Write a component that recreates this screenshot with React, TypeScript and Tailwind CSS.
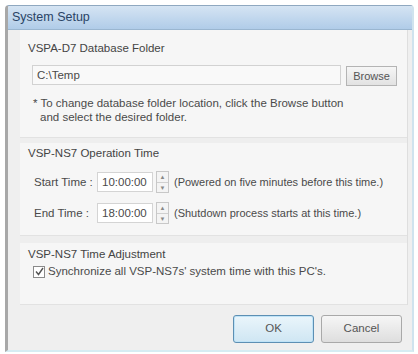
import React from "react";

function Spinner() {
  return (
    <div className="flex flex-col w-[13px] h-[22px] border border-[#c8c8c8] bg-[#f4f4f4] ml-[3px]">
      <div className="flex-1 flex items-center justify-center border-b border-[#d0d0d0] text-[6px] leading-none text-[#888]">
        ▲
      </div>
      <div className="flex-1 flex items-center justify-center text-[6px] leading-none text-[#888]">
        ▼
      </div>
    </div>
  );
}

interface TimeRowProps {
  label: string;
  value: string;
  note: string;
}

function TimeRow({ label, value, note }: TimeRowProps) {
  return (
    <div className="flex items-center h-[22px]">
      <span className="w-[64px] pl-[1px]">{label}</span>
      <div className="w-[56px] h-[20px] border border-[#d4d4d4] bg-white flex items-center pl-[4px]">
        {value}
      </div>
      <Spinner />
      <span className="ml-[5px] text-[11px]">{note}</span>
    </div>
  );
}

function Section({ title, className, children }: { title: string; className: string; children: React.ReactNode }) {
  return (
    <div className={"bg-[#f6f6f6] border-b border-[#e2e2e2] pl-[8px] " + className}>
      <div className="text-[#444]">{title}</div>
      <div className="pl-[5px]">{children}</div>
    </div>
  );
}

export default function App() {
  return (
    <div className="w-[418px] h-[354px] bg-white text-[11.5px] text-[#4a4a4a] font-['Liberation_Sans',Arial,sans-serif] pt-[5px] pl-[5px]">
      <div className="w-[409px] h-[347px] flex flex-col border-l-[3px] border-l-[#a8a8a8] border-r-2 border-r-[#cfe3ee] border-b-2 border-b-[#d6ecf3] border-t border-t-[#8fa8c0] rounded-t-[4px] overflow-hidden bg-[#efefef]">
        <div className="h-[24px] flex items-center pl-[4px] bg-gradient-to-b from-[#d5e4f3] to-[#b0cce8] border-b border-[#9ab6d0] text-[12.5px] text-[#2a4466]">
          System Setup
        </div>
        <div className="flex-1 flex flex-col pl-[12px] pr-[4px]">
          <div className="flex flex-col bg-[#f4f4f4] border-r border-[#dedede]">
            <Section title="VSPA-D7 Database Folder" className="h-[108px] pt-[10px]">
              <div className="flex items-center mt-[7px]">
                <div className="w-[309px] h-[20px] border border-[#d2d2d2] bg-[#f9f9f9] flex items-center pl-[4px] -ml-[1px]">
                  C:\Temp
                </div>
                <button className="ml-[5px] mt-[2px] w-[51px] h-[20px] border border-[#b4b4b4] bg-gradient-to-b from-[#f6f6f6] to-[#e2e2e2] text-[11px] text-[#555]">
                  Browse
                </button>
              </div>
              <div className="mt-[10px] leading-[14px]">
                * To change database folder location, click the Browse button
                <br />
                <span className="pl-[7px]">and select the desired folder.</span>
              </div>
            </Section>
            <div className="h-[5px] bg-[#eeeeee]" />
            <Section title="VSP-NS7 Operation Time" className="h-[93px] pt-[2px]">
              <div className="mt-[9px] flex flex-col gap-[9px]">
                <TimeRow label="Start Time :" value="10:00:00" note="(Powered on five minutes before this time.)" />
                <TimeRow label="End Time :" value="18:00:00" note="(Shutdown process starts at this time.)" />
              </div>
            </Section>
            <div className="h-[7px] bg-[#eeeeee]" />
            <Section title="VSP-NS7 Time Adjustment" className="h-[62px] pt-[3px]">
              <div className="flex items-center mt-[0px]">
                <div className="w-[12px] h-[12px] border border-[#8a8a8a] bg-white flex items-center justify-center">
                  <svg width="9" height="9" viewBox="0 0 9 9">
                    <path d="M1 4.5 L3.5 7.5 L8 1" stroke="#555" strokeWidth="1.4" fill="none" />
                  </svg>
                </div>
                <span className="ml-[3px]">Synchronize all VSP-NS7s' system time with this PC's.</span>
              </div>
            </Section>
          </div>
          <div className="flex justify-end gap-[7px] mt-[10px] pr-[6px]">
            <button className="w-[81px] h-[28px] border border-[#5d8fb3] rounded-[3px] bg-gradient-to-b from-[#eaf5fb] to-[#cfe6f3] shadow-[inset_0_0_0_1px_#bfe3f7] text-[#555]">
              OK
            </button>
            <button className="w-[81px] h-[28px] border border-[#a9a9a9] rounded-[3px] bg-gradient-to-b from-[#f6f6f6] to-[#dedede] text-[#555]">
              Cancel
            </button>
          </div>
        </div>
      </div>
    </div>
  );
}
